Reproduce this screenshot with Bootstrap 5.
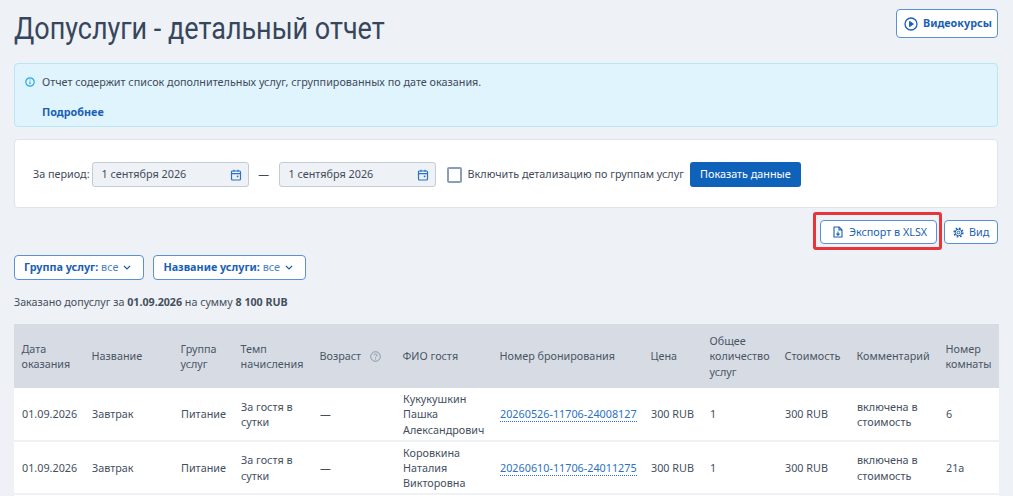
<!DOCTYPE html>
<html lang="ru">
<head>
  <meta charset="UTF-8" />
  <title>Допуслуги - детальный отчет</title>
  <link href="https://cdn.jsdelivr.net/npm/bootstrap@5.3.0/dist/css/bootstrap.min.css" rel="stylesheet" />
  <style>
    html, body { height: 496px; overflow: hidden; }
    body { background: #eef1f5; color: #3f4a5a; font-family: "Noto Sans", "Open Sans", sans-serif; font-size: 10.8px; }
    .page-wrap { padding: 0 15px 0 14px; }
    .page-head { height: 63px; }
    .page-title { font-family: Roboto, sans-serif; font-size: 31px; font-weight: 400; color: #36465c; margin: 0; line-height: 36px; padding-top: 11px; transform: scaleX(.87); transform-origin: left center; white-space: nowrap; }
    .btn-video { margin-top: 9px; height: 29px; width: 102px; font-size: 10.8px; font-weight: 700; color: #1a5fb4; border: 1px solid #5a90d4; border-radius: 4px; background: #fff; padding: 0 0 0 7px; gap: 5px; white-space: nowrap; }
    .info-box { height: 64px; background: #e0f4fe; border: 1px solid #b9e5f8; border-radius: 4px; padding: 9px 0 0 10px; }
    .info-box a { color: #1a5fb4; font-weight: 700; text-decoration: none; display: block; margin-top: 14px; padding-left: 17px; }
    .info-ico { margin-right: 7px; }
    .info-line { line-height: 17px; }
    .filter-box { height: 69px; margin-top: 12px; background: #fff; border: 1px solid #dfe4ea; border-radius: 4px; padding: 2px 0 0 18px; }
    .period-label { margin-right: 2px; }
    .date-input { width: 157px; height: 25px; background: #eef1f5; border: 1px solid #c3cbd6; border-radius: 3px; padding: 0 6px 0 9px; font-size: 10.8px; }
    .dash-sep { width: 30px; text-align: center; }
    .check-box { width: 15px; height: 16px; border: 2px solid #8d9db5; border-radius: 2px; background: #fff; margin: 0 6px 0 11px; }
    .btn-show { height: 25px; width: 111px; background: #0f62ba; color: #fff; border-radius: 3px; font-size: 10.8px; padding: 0; margin-left: 6px; border: 0; white-space: nowrap; }
    .tools-row { height: 24px; margin-top: 12px; gap: 2px; }
    .export-wrap { border: 3px solid #e8343b; border-radius: 3px; padding: 5px 2px 3px 4px; margin: -8px 0 -6px; }
    .btn-tool { height: 24px; background: #fff; color: #1a5fb4; border: 1px solid #5a90d4; border-radius: 4px; font-size: 10.8px; gap: 6px; white-space: nowrap; }
    .btn-export { width: 117px; padding: 0 0 0 12px; }
    .btn-view { width: 54px; padding: 0 0 0 8px; gap: 5px; }
    .drop-row { margin-top: 11px; gap: 9px; }
    .btn-drop { height: 25px; background: #fff; color: #1a5fb4; border: 1px solid #5a90d4; border-radius: 4px; font-size: 10.8px; padding: 0 12px 0 9px; gap: 5px; white-space: nowrap; }
    .drop-label { font-weight: 700; }
    .drop-val { color: #4a7fc1; }
    .summary-line { margin-top: 14px; line-height: 17px; color: #444f5e; font-size: 10.7px; }
    .report-table { table-layout: fixed; width: 985px; margin-top: 13px; border-collapse: collapse; background: #fff; line-height: 15.3px; }
    .report-table th { background: #d7dce4; font-weight: 400; color: #4a5565; height: 64px; padding: 0 7px 0 7.5px; vertical-align: middle; }
    .report-table td { height: 53px; padding: 0 7px 0 8px; vertical-align: middle; border-bottom: 2px solid #eef1f5; color: #444f5e; }
    .report-table a { color: #2b72c2; text-decoration: none; border-bottom: 1px dotted #2b72c2; white-space: nowrap; }
    .hint-ico { margin-left: 6px; vertical-align: -2px; }
    .c1 { width: 70px; } .c2 { width: 89px; } .c3 { width: 60px; } .c4 { width: 79px; }
    .c5 { width: 83px; } .c6 { width: 97px; } .c7 { width: 151px; } .c8 { width: 59px; }
    .c9 { width: 75px; } .c10 { width: 72px; } .c11 { width: 89px; } .c12 { width: 61px; }
  </style>
</head>
<body>
<div class="page-wrap">

  <div class="page-head d-flex justify-content-between align-items-start">
    <h1 class="page-title">Допуслуги - детальный отчет</h1>
    <button class="btn btn-video d-flex align-items-center" type="button">
      <svg width="14" height="14" viewBox="0 0 14 14" fill="none" stroke="#1a5fb4" stroke-width="1.3"><circle cx="7" cy="7" r="6"/><path d="M5.6 4.4 9.4 7 5.6 9.6Z" fill="#1a5fb4" stroke-linejoin="round" stroke-width="1"/></svg>
      Видеокурсы
    </button>
  </div>

  <div class="info-box">
    <div class="info-line d-flex align-items-center">
      <svg class="info-ico" width="10" height="10" viewBox="0 0 10 10" fill="none"><circle cx="5" cy="5" r="4.2" stroke="#2aa7e8" stroke-width="1.2"/><path d="M5 4.4v2.8M5 2.6v.9" stroke="#2aa7e8" stroke-width="1.2"/></svg>
      <span>Отчет содержит список дополнительных услуг, сгруппированных по дате оказания.</span>
    </div>
    <a href="#">Подробнее</a>
  </div>

  <div class="filter-box d-flex align-items-center">
    <span class="period-label">За период:</span>
    <div class="date-input d-flex align-items-center justify-content-between">
      <span>1 сентября 2026</span>
      <svg width="12" height="12" viewBox="0 0 12 12" fill="none" stroke="#2b72c2" stroke-width="1.2"><rect x="1.5" y="2" width="9" height="9" rx="1"/><path d="M1.5 4.6h9M4 .8v2M8 .8v2"/><rect x="6.8" y="6.6" width="1.6" height="1.6" fill="#2b72c2" stroke="none"/></svg>
    </div>
    <span class="dash-sep">—</span>
    <div class="date-input d-flex align-items-center justify-content-between">
      <span>1 сентября 2026</span>
      <svg width="12" height="12" viewBox="0 0 12 12" fill="none" stroke="#2b72c2" stroke-width="1.2"><rect x="1.5" y="2" width="9" height="9" rx="1"/><path d="M1.5 4.6h9M4 .8v2M8 .8v2"/><rect x="6.8" y="6.6" width="1.6" height="1.6" fill="#2b72c2" stroke="none"/></svg>
    </div>
    <span class="check-box"></span>
    <span>Включить детализацию по группам услуг</span>
    <button class="btn btn-show" type="button">Показать данные</button>
  </div>

  <div class="tools-row d-flex justify-content-end align-items-center">
    <div class="export-wrap">
      <button class="btn btn-tool btn-export d-flex align-items-center" type="button">
        <svg width="10" height="12" viewBox="0 0 10 12" fill="none" stroke="#1a5fb4" stroke-width="1.1"><path d="M1 1h5l3 3v7H1z" stroke-linejoin="round"/><path d="M6 1v3h3"/><path d="M5 5.6v3.4M3.4 7.6 5 9.2l1.6-1.6"/></svg>
        <span>Экспорт в XLSX</span>
      </button>
    </div>
    <button class="btn btn-tool btn-view d-flex align-items-center" type="button">
      <svg width="11" height="11" viewBox="0 0 11 11" fill="none" stroke="#1a5fb4"><circle cx="5.5" cy="5.5" r="1.4" stroke-width="1"/><circle cx="5.5" cy="5.5" r="3.3" stroke-width="1"/><circle cx="5.5" cy="5.5" r="4.4" stroke-width="1.4" stroke-dasharray="1.7 1.75"/></svg>
      Вид
    </button>
  </div>

  <div class="drop-row d-flex">
    <button class="btn btn-drop d-flex align-items-center" type="button">
      <span><span class="drop-label">Группа услуг:</span> <span class="drop-val">все</span></span>
      <svg width="8" height="5" viewBox="0 0 8 5" fill="none" stroke="#1a5fb4" stroke-width="1.2"><path d="M1 1l3 3 3-3"/></svg>
    </button>
    <button class="btn btn-drop d-flex align-items-center" type="button">
      <span><span class="drop-label">Название услуги:</span> <span class="drop-val">все</span></span>
      <svg width="8" height="5" viewBox="0 0 8 5" fill="none" stroke="#1a5fb4" stroke-width="1.2"><path d="M1 1l3 3 3-3"/></svg>
    </button>
  </div>

  <div class="summary-line">Заказано допуслуг за <b>01.09.2026</b> на сумму <b>8 100 RUB</b></div>

  <table class="report-table">
    <colgroup>
      <col class="c1"><col class="c2"><col class="c3"><col class="c4"><col class="c5"><col class="c6"><col class="c7"><col class="c8"><col class="c9"><col class="c10"><col class="c11"><col class="c12">
    </colgroup>
    <thead>
      <tr>
        <th>Дата оказания</th><th>Название</th><th>Группа услуг</th><th>Темп начисления</th>
        <th>Возраст <svg class="hint-ico" width="11" height="11" viewBox="0 0 11 11" fill="none" stroke="#8a95a5"><circle cx="5.5" cy="5.5" r="4.8"/><path d="M4 4.4c0-2 3-2 3 0 0 1-1.5 1-1.5 2.2M5.5 7.6v1"/></svg></th>
        <th>ФИО гостя</th><th>Номер бронирования</th><th>Цена</th><th>Общее количество услуг</th><th>Стоимость</th><th>Комментарий</th><th>Номер комнаты</th>
      </tr>
    </thead>
    <tbody>
      <tr>
        <td>01.09.2026</td><td>Завтрак</td><td>Питание</td><td>За гостя в сутки</td><td>—</td><td>Кукукушкин Пашка Александрович</td>
        <td><a href="#">20260526-11706-24008127</a></td><td>300 RUB</td><td>1</td><td>300 RUB</td><td>включена в стоимость</td><td>6</td>
      </tr>
      <tr>
        <td>01.09.2026</td><td>Завтрак</td><td>Питание</td><td>За гостя в сутки</td><td>—</td><td>Коровкина Наталия Викторовна</td>
        <td><a href="#">20260610-11706-24011275</a></td><td>300 RUB</td><td>1</td><td>300 RUB</td><td>включена в стоимость</td><td>21а</td>
      </tr>
      <tr>
        <td colspan="12"></td>
      </tr>
    </tbody>
  </table>

</div>
<script src="https://cdn.jsdelivr.net/npm/bootstrap@5.3.0/dist/js/bootstrap.bundle.min.js"></script>
</body>
</html>
